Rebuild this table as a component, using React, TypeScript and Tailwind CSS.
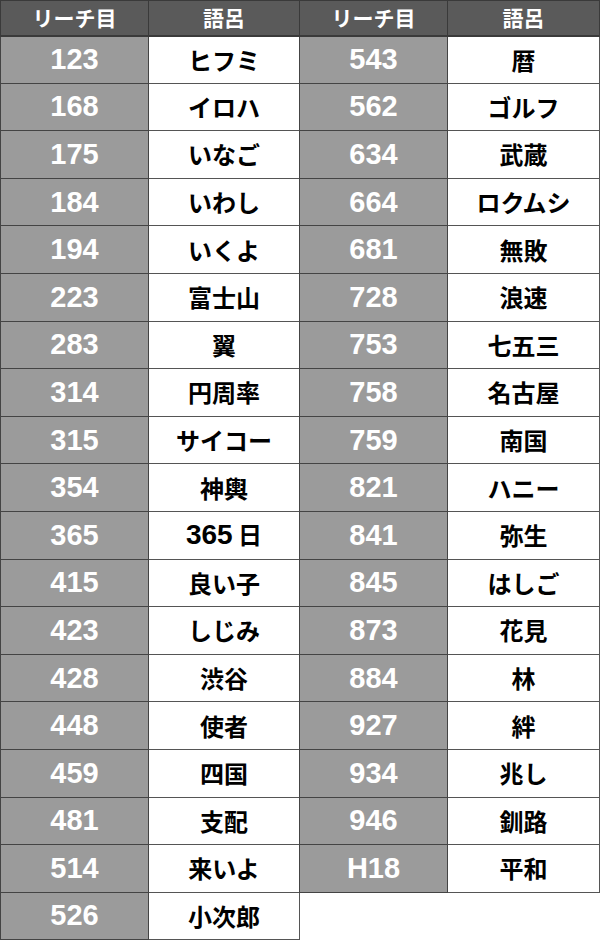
import React from "react";

type Row = [string, string];

const left: Row[] = [
  ["123", "ヒフミ"],
  ["168", "イロハ"],
  ["175", "いなご"],
  ["184", "いわし"],
  ["194", "いくよ"],
  ["223", "富士山"],
  ["283", "翼"],
  ["314", "円周率"],
  ["315", "サイコー"],
  ["354", "神輿"],
  ["365", "365 日"],
  ["415", "良い子"],
  ["423", "しじみ"],
  ["428", "渋谷"],
  ["448", "使者"],
  ["459", "四国"],
  ["481", "支配"],
  ["514", "来いよ"],
  ["526", "小次郎"],
];

const right: Row[] = [
  ["543", "暦"],
  ["562", "ゴルフ"],
  ["634", "武蔵"],
  ["664", "ロクムシ"],
  ["681", "無敗"],
  ["728", "浪速"],
  ["753", "七五三"],
  ["758", "名古屋"],
  ["759", "南国"],
  ["821", "ハニー"],
  ["841", "弥生"],
  ["845", "はしご"],
  ["873", "花見"],
  ["884", "林"],
  ["927", "絆"],
  ["934", "兆し"],
  ["946", "釧路"],
  ["H18", "平和"],
];

const jp = { fontFamily: '"Noto Sans CJK JP", "Noto Sans", sans-serif' };
const num = { fontFamily: '"Liberation Sans", Arial, sans-serif' };

function ReachTable({ rows, width }: { rows: Row[]; width: string }) {
  return (
    <table className={`${width} border-collapse table-fixed`}>
      <colgroup>
        <col className="w-[148px]" />
        <col />
      </colgroup>
      <thead>
        <tr className="h-[35px] bg-[#5a5a5a]">
          <th
            className="border border-[#3a3a3a] border-b-2 text-white text-[21px] font-bold leading-none"
            style={jp}
          >
            リーチ目
          </th>
          <th
            className="border border-[#3a3a3a] border-b-2 text-white text-[21px] font-bold leading-none"
            style={jp}
          >
            語呂
          </th>
        </tr>
      </thead>
      <tbody>
        {rows.map(([n, word]) => (
          <tr key={n} className="h-[47.6px]">
            <td
              className="border border-[#444] bg-[#9b9b9b] text-center text-white text-[29px] font-bold leading-none"
              style={num}
            >
              {n}
            </td>
            <td
              className="border border-[#555] bg-white text-center text-black text-[24px] font-bold leading-none"
              style={jp}
            >
              {word === "365 日" ? (
                <>
                  <span className="text-[28px]" style={num}>
                    365
                  </span>{" "}
                  日
                </>
              ) : (
                word
              )}
            </td>
          </tr>
        ))}
      </tbody>
    </table>
  );
}

export default function App() {
  return (
    <div className="w-[600px] h-[950px] bg-white">
      <div className="flex items-start">
        <ReachTable rows={left} width="w-[300px]" />
        <div className="-ml-px">
          <ReachTable rows={right} width="w-[301px]" />
        </div>
      </div>
    </div>
  );
}
